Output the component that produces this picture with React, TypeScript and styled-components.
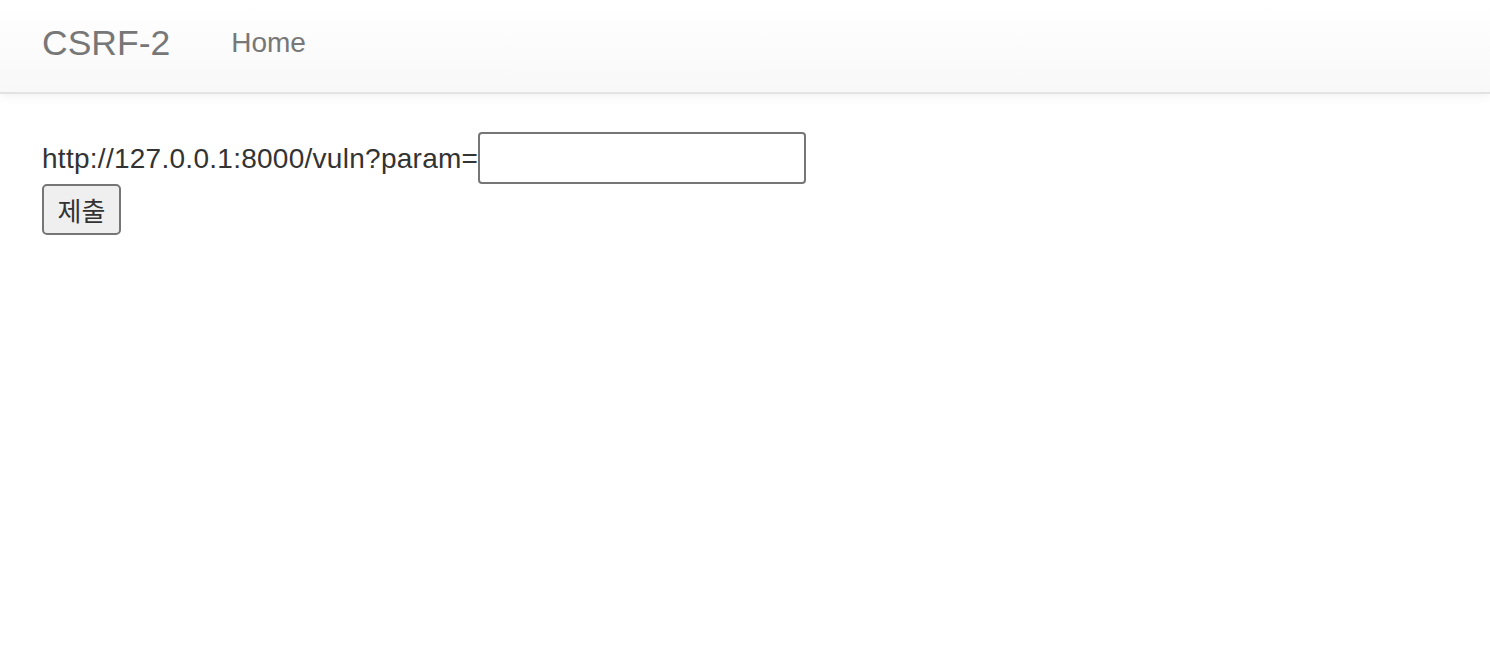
import React from "react";
import styled, { createGlobalStyle } from "styled-components";

const GlobalStyle = createGlobalStyle`
  html, body {
    margin: 0;
    padding: 0;
    background: #fff;
  }
  body {
    font-family: "Liberation Sans", Arial, "Noto Sans CJK KR", sans-serif;
    color: #333;
  }
`;

function App() {
  return (
    <>
      <GlobalStyle />
      <StNavbar>
        <StBrand href="#">CSRF-2</StBrand>
        <StNavLink href="#">Home</StNavLink>
      </StNavbar>
      <StMain>
        <StForm onSubmit={(e) => e.preventDefault()}>
          <StRow>
            <StLabel>http://127.0.0.1:8000/vuln?param=</StLabel>
            <StInput type="text" name="param" />
          </StRow>
          <StButton type="submit">제출</StButton>
        </StForm>
      </StMain>
    </>
  );
}

export default App;

const StNavbar = styled.nav`
  display: flex;
  align-items: center;
  gap: 61px;
  box-sizing: border-box;
  height: 94px;
  padding: 0 0 6px 42px;
  background-image: linear-gradient(to bottom, #ffffff 0%, #f8f8f8 100%);
  border-bottom: 2px solid #e2e2e2;
  box-shadow: 0 2px 10px rgba(0, 0, 0, 0.06);
`;

const StBrand = styled.a`
  font-size: 35.5px;
  line-height: 40px;
  color: #777;
  text-decoration: none;
`;

const StNavLink = styled.a`
  font-size: 28px;
  line-height: 40px;
  color: #777;
  text-decoration: none;
`;

const StMain = styled.main`
  padding: 38px 42px 0;
`;

const StForm = styled.form`
  display: flex;
  flex-direction: column;
  align-items: flex-start;
`;

const StRow = styled.div`
  display: flex;
  align-items: center;
  height: 52px;
`;

const StLabel = styled.span`
  padding-top: 2px;
  font-size: 28px;
  letter-spacing: 0.27px;
  line-height: 40px;
  color: #333;
`;

const StInput = styled.input`
  box-sizing: border-box;
  width: 328px;
  height: 52px;
  margin: 0;
  padding: 2px 4px;
  font-family: inherit;
  font-size: 28px;
  border: 2px solid #767676;
  border-radius: 4px;
  background: #fff;
  outline: none;
`;

const StButton = styled.button`
  box-sizing: border-box;
  display: flex;
  align-items: center;
  justify-content: center;
  width: 79px;
  height: 51px;
  margin: 0;
  padding: 0;
  white-space: nowrap;
  font-family: "Noto Sans CJK KR", sans-serif;
  font-size: 26px;
  line-height: 40px;
  color: #333;
  background: #efefef;
  border: 2px solid #767676;
  border-radius: 5px;
`;
